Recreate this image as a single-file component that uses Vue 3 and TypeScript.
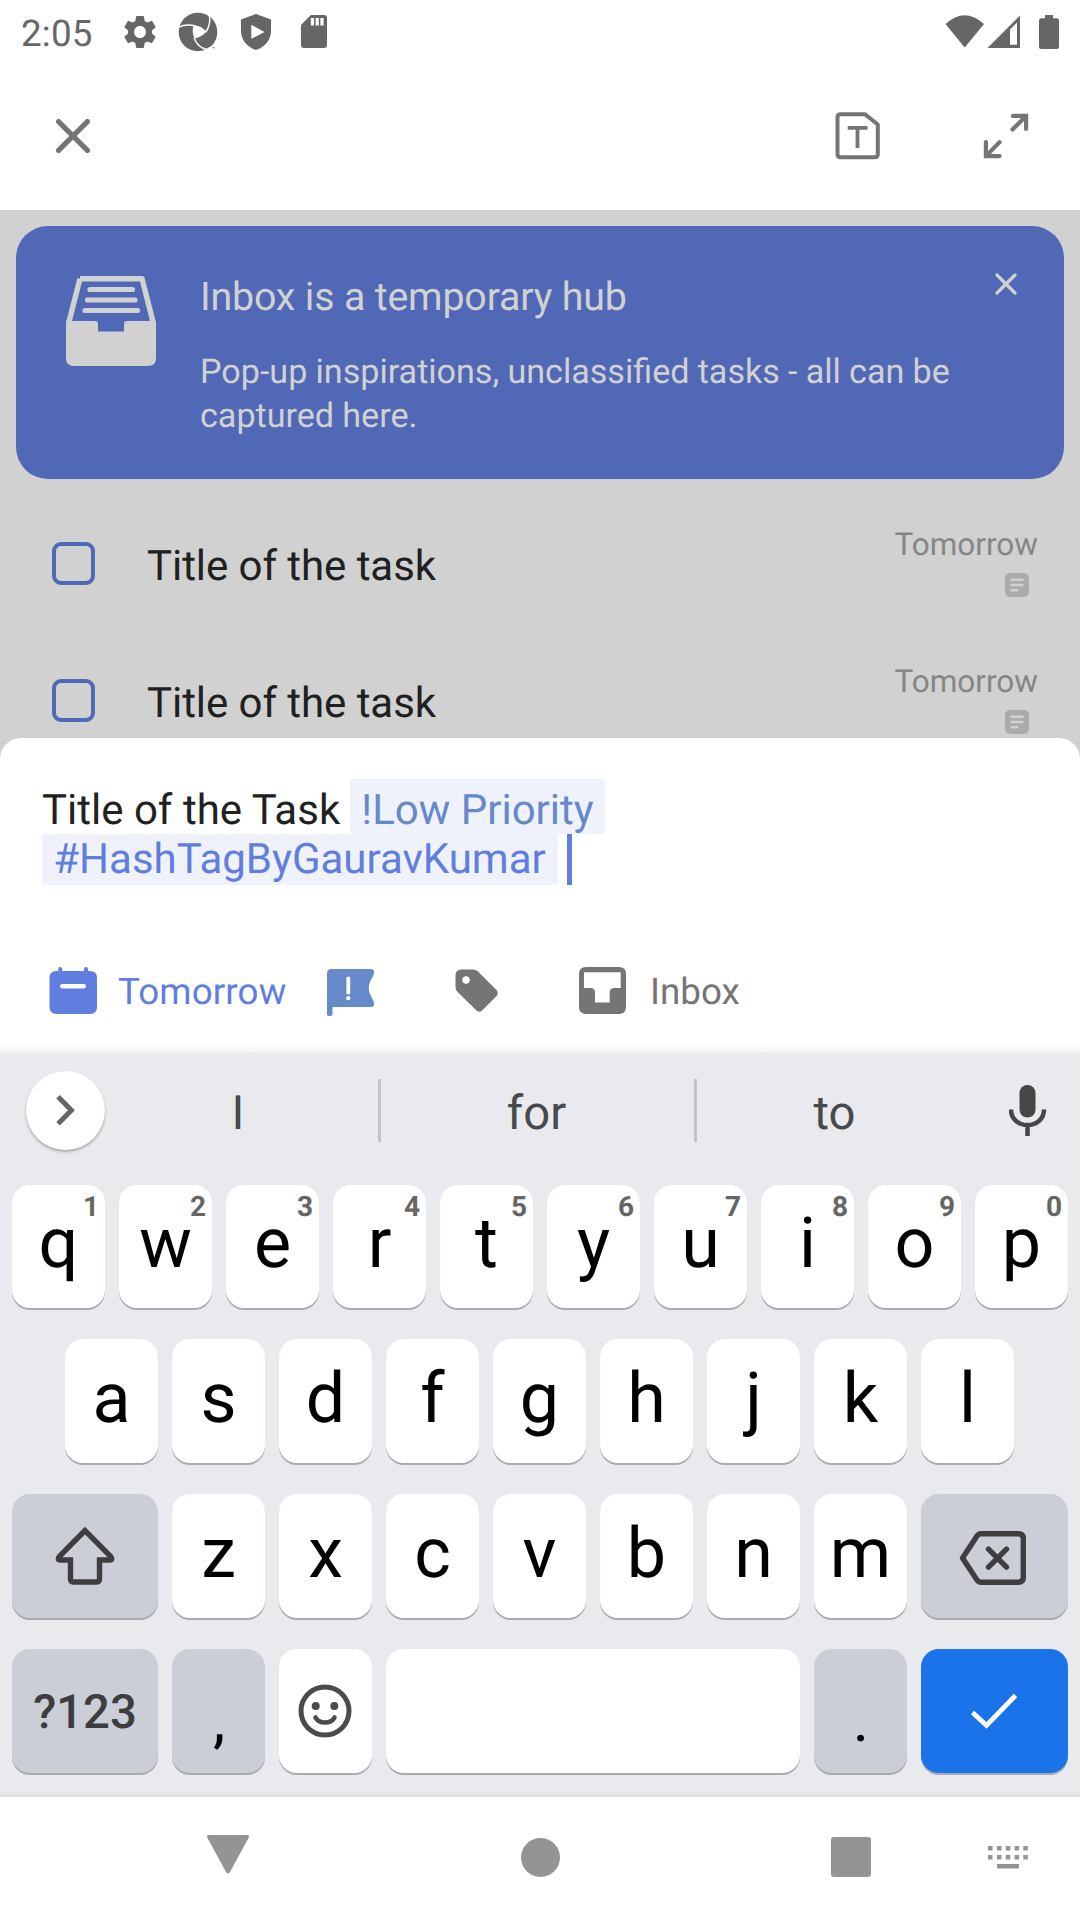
<script setup lang="ts">
interface Key {
  label: string
  hint?: string
}

const tasks = [
  { id: 1, title: 'Title of the task', due: 'Tomorrow' },
  { id: 2, title: 'Title of the task', due: 'Tomorrow' },
]

const topRow: Key[] = 'qwertyuiop'.split('').map((label, i) => ({
  label,
  hint: String((i + 1) % 10),
}))
const homeRow = 'asdfghjkl'.split('')
const bottomRow = 'zxcvbnm'.split('')
const suggestions = ['I', 'for', 'to']
</script>

<template>
  <div class="screen">
    <header class="top">
      <div class="status">
        <span class="clock">2:05</span>
        <svg class="gear" width="40" height="40" viewBox="0 0 24 24" fill="#666">
          <path d="M19.14 12.94c.04-.3.06-.61.06-.94 0-.32-.02-.64-.07-.94l2.03-1.58c.18-.14.23-.41.12-.61l-1.92-3.32c-.12-.22-.37-.29-.59-.22l-2.39.96c-.5-.38-1.03-.7-1.62-.94l-.36-2.54c-.04-.24-.24-.41-.48-.41h-3.84c-.24 0-.43.17-.47.41l-.36 2.54c-.59.24-1.13.57-1.62.94l-2.39-.96c-.22-.08-.47 0-.59.22L2.74 8.87c-.12.21-.08.47.12.61l2.03 1.58c-.05.3-.09.63-.09.94s.02.64.07.94l-2.03 1.58c-.18.14-.23.41-.12.61l1.92 3.32c.12.22.37.29.59.22l2.39-.96c.5.38 1.03.7 1.62.94l.36 2.54c.05.24.24.41.48.41h3.84c.24 0 .44-.17.47-.41l.36-2.54c.59-.24 1.13-.56 1.62-.94l2.39.96c.22.08.47 0 .59-.22l1.92-3.32c.12-.22.07-.47-.12-.61l-2.01-1.58zM12 15.6c-1.98 0-3.6-1.62-3.6-3.6s1.62-3.6 3.6-3.6 3.6 1.62 3.6 3.6-1.62 3.6-3.6 3.6z" />
        </svg>
        <svg class="aperture" width="40" height="40" viewBox="0 0 40 40">
          <circle cx="20" cy="20" r="19.3" fill="#666" />
          <path d="M15.5 13.6Q22 12.5 28.5 19.5Q24 25 16.5 26.6Q13.5 20 15.5 13.6Z" fill="#fff" />
          <g fill="none" stroke="#fff" stroke-width="1.5">
            <path d="M0 15.5Q8 11.5 18 14.2" />
            <path d="M31 2.5Q33.5 11 28 20" />
            <path d="M16 26Q20 35.500 28.500 37.500" />
          </g>
          <path d="M27.500 37L34 34V40H25Z" fill="#fff" />
          <path d="M34 35.800h3" stroke="#888" stroke-width="1" />
        </svg>
        <svg class="shield" width="30" height="36" viewBox="0 0 30 36" fill="#666">
          <path fill-rule="evenodd" d="M15 0L30 5.500V17C30 26 24 33 15 36C6 33 0 26 0 17V5.500ZM10.300 10.800V24.800L23.500 18Z" />
        </svg>
        <svg class="sd" width="26" height="33" viewBox="0 0 26 33" fill="#666">
          <path fill-rule="evenodd" d="M9.800 0H23Q26 0 26 3V30Q26 33 23 33H3Q0 33 0 30V10ZM9.800 3V10.500H13V3ZM14.600 3V10.500H17.800V3ZM19.400 3V10.500H22.600V3Z" />
        </svg>
        <svg class="signals" width="116" height="36" viewBox="944 13 116 36" fill="#666">
          <path d="M945.500 23Q964.500 5.500 984 23L964.700 46.500Z" />
          <path fill-rule="evenodd" d="M1020 14.500V47H987.500ZM1017 21.500L1010 28.500V43.800H1017Z" />
          <path d="M1045 14h8v3.300h3.500q2.500 0 2.500 2.500V45.500q0 2.500-2.500 2.500h-15q-2.500 0-2.500-2.500V19.800q0-2.500 2.500-2.500h3.500z" />
        </svg>
      </div>
      <div class="actions">
        <svg width="36" height="36" viewBox="0 0 36 36" stroke="#757575" stroke-width="5.200" stroke-linecap="round">
          <path d="M3.600 3.600L32.400 32.400M32.400 3.600L3.600 32.400" />
        </svg>
        <span class="spacer"></span>
        <svg class="template" width="46" height="48" viewBox="0 0 46 48" fill="none" stroke="#757575">
          <path d="M5.500 2.200H30L42.800 12.500V42.300Q42.800 45.300 39.800 45.300H5.500Q2.500 45.300 2.500 42.300V5.200Q2.500 2.200 5.500 2.200Z" stroke-width="4" stroke-linejoin="round" />
          <path d="M12.700 15.800H32.500M22.500 15.800V36" stroke-width="3.800" />
        </svg>
        <svg width="46" height="46" viewBox="0 0 46 46" fill="none" stroke="#757575" stroke-width="4.200" stroke-linecap="round">
          <path d="M30 2.900H43.100V16M43.100 2.900L29.500 16.500" />
          <path d="M2.900 29V43.100H16.500M2.900 43.100L16.500 29.300" />
        </svg>
      </div>
    </header>

    <main class="backdrop">
      <section class="banner">
        <svg class="tray" width="90" height="90" viewBox="0 0 90 90">
          <path d="M14 2.700H76L87.300 47M14 2.700L2.700 47" fill="none" stroke="#d1d1d1" stroke-width="5.400" stroke-linejoin="round" />
          <path d="M0 45H29Q32 45 32 48V55.500H58V48Q58 45 61 45H90V82Q90 90 82 90H8Q0 90 0 82Z" fill="#d1d1d1" />
          <path d="M24 13.500H66.500M21.500 24H69M19 34.500H71.500" stroke="#d1d1d1" stroke-width="5.200" stroke-linecap="round" />
        </svg>
        <div class="banner-copy">
          <h1>Inbox is a temporary hub</h1>
          <p>Pop-up inspirations, unclassified tasks - all can be captured here.</p>
        </div>
        <svg class="dismiss" width="22" height="22" viewBox="0 0 22 22" stroke="#d1d1d1" stroke-width="3.200" stroke-linecap="round">
          <path d="M2 2L20 20M20 2L2 20" />
        </svg>
      </section>

      <div v-for="task in tasks" :key="task.id" class="task">
        <span class="checkbox"></span>
        <span class="task-title">{{ task.title }}</span>
        <div class="meta">
          <span>{{ task.due }}</span>
          <svg width="24" height="24" viewBox="0 0 24 24">
            <rect width="24" height="24" rx="5" fill="#ababab" />
            <path d="M6.500 6.700H17.500M6.500 12H17.500M6.500 17.300H12" stroke="#d1d1d1" stroke-width="2.600" stroke-linecap="round" />
          </svg>
        </div>
      </div>
    </main>

    <div class="sheet-wrap">
      <section class="sheet">
        <div class="line first">
          <span class="typed">Title of the Task</span>
          <span class="chip priority">!Low Priority</span>
        </div>
        <div class="line">
          <span class="chip tag">#HashTagByGauravKumar</span>
          <span class="caret"></span>
        </div>
        <div class="tools">
          <svg width="48" height="48" viewBox="0 0 48 48" fill="#607edf">
            <path fill-rule="evenodd" d="M9.300 4V2q0-2 2-2t2 2v2H35V2q0-2 2-2t2 2v2h2q7 0 7 7V40q0 7-7 7H7.500q-7 0-7-7V11q0-7 7-7ZM13.500 17q-2.500 0-2.500 2.300t2.500 2.300h21q2.500 0 2.500-2.300T34.500 17Z" />
          </svg>
          <span class="tool-date">Tomorrow</span>
          <svg class="flag" width="50" height="50" viewBox="0 0 50 50">
            <path d="M5.500 3H44.500Q49 3 48 7.500C46 13 42.800 16 42.800 22S46 31 48 36.500Q49 41 44.500 41H6.500V48.500Q6 50 3.700 50T1 48.500V7.500Q1 3 5.500 3Z" fill="#6589ca" />
            <path d="M22.300 12.500V26.500" stroke="#fff" stroke-width="3.800" stroke-linecap="round" />
            <circle cx="22.300" cy="32.200" r="2.100" fill="#fff" />
          </svg>
          <svg class="label" width="44" height="44" viewBox="0 0 44 44" fill="#757575">
            <path fill-rule="evenodd" d="M6.500 .5H18Q21 .500 23 2.500L41.500 21Q44 24 41.500 27L27 41.500Q24.500 44 21.500 41.500L2.500 23Q.500 21 .500 18V6.500Q.500 .500 6.500 .500ZM11 7.300a3.700 3.700 0 1 0 0 7.400a3.700 3.700 0 1 0 0-7.400Z" />
          </svg>
          <svg class="box" width="48" height="48" viewBox="0 0 48 48" fill="#757575">
            <path fill-rule="evenodd" d="M7 0H40Q47 0 47 7V40Q47 47 40 47H7Q0 47 0 40V7Q0 0 7 0ZM5 5.300V21H11.500Q16 21 16 25.500V35.500H30.700V25.500Q30.700 21 35.200 21H41.700V5.300Z" />
          </svg>
          <span class="tool-list">Inbox</span>
        </div>
      </section>
    </div>

    <section class="keyboard">
      <div class="strip">
        <div class="more">
          <svg width="80" height="80" viewBox="0 0 80 80">
            <path d="M32.500 26L46 39.700L32.500 53.400" fill="none" stroke="#666" stroke-width="5" />
          </svg>
        </div>
        <template v-for="(word, i) in suggestions" :key="word">
          <span v-if="i > 0" class="rule"></span>
          <span class="word" :class="'w' + i">{{ word }}</span>
        </template>
        <svg class="mic" width="38" height="51" viewBox="0 0 38 51">
          <rect x="10.500" y="0" width="16" height="32.500" rx="8" fill="#444648" />
          <path d="M2 24.500C2 34 9.500 40 18.500 40S35 34 35 24.500M18.500 40V51" fill="none" stroke="#444648" stroke-width="4.500" />
        </svg>
      </div>

      <div class="row r1">
        <div v-for="key in topRow" :key="key.label" class="key">
          {{ key.label }}<span class="hint">{{ key.hint }}</span>
        </div>
      </div>
      <div class="row r2">
        <div v-for="letter in homeRow" :key="letter" class="key">{{ letter }}</div>
      </div>
      <div class="row">
        <div class="key wide grey">
          <svg class="shift" width="62" height="60" viewBox="0 0 62 60" fill="none" stroke="#3e3e40" stroke-width="5.400">
            <path d="M31 4.500L5.500 30.300Q2.500 34 6.500 34H16.500V53Q16.500 56 19.500 56H42.500Q45.500 56 45.500 53V34H55.500Q59.500 34 56.500 30.300Z" />
          </svg>
        </div>
        <div v-for="letter in bottomRow" :key="letter" class="key">{{ letter }}</div>
        <div class="key wide-end grey">
          <svg class="erase" width="68" height="56" viewBox="0 0 68 56" fill="none" stroke="#3e3e40" stroke-width="5.400" stroke-linejoin="round">
            <path d="M22 3.700H59Q64.300 3.700 64.300 8V47.500Q64.300 52.200 59 52.200H22Q19.500 52.200 18 50L3.500 28L18 6Q19.500 3.700 22 3.700Z" />
            <path d="M29.500 19.200L47.500 37.200M47.500 19.200L29.500 37.200" stroke-linecap="round" />
          </svg>
        </div>
      </div>
      <div class="row">
        <div class="key wide grey sym">?123</div>
        <div class="key grey punct">,</div>
        <div class="key">
          <svg class="smile" width="54" height="54" viewBox="0 0 54 54">
            <circle cx="27" cy="27" r="24" fill="none" stroke="#4b4b4d" stroke-width="5" />
            <circle cx="17.700" cy="22" r="4" fill="#4b4b4d" />
            <circle cx="36.300" cy="22" r="4" fill="#4b4b4d" />
            <path d="M17.500 33.500Q20 38.500 27 38.500T36.500 33.500" fill="none" stroke="#4b4b4d" stroke-width="4.600" stroke-linecap="round" />
          </svg>
        </div>
        <div class="key space"></div>
        <div class="key grey punct">.</div>
        <div class="key wide-end enter">
          <svg width="48" height="38" viewBox="0 0 48 38" fill="none" stroke="#fff" stroke-width="4.800">
            <path d="M2.500 20.500L16.500 33.500L45.500 3.500" />
          </svg>
        </div>
      </div>
    </section>

    <nav class="nav">
      <svg class="back" width="42" height="39" viewBox="0 0 42 39" fill="#949494">
        <path d="M2 0H40Q43 0 41.500 3L23 37Q21 40 19 37L.500 3Q-1 0 2 0Z" />
      </svg>
      <span class="home"></span>
      <span class="recents"></span>
      <svg class="ime" width="42" height="24" viewBox="0 0 42 24" fill="#949494">
        <path d="M1 0h4.500v4.500H1zM10 0h4.500v4.500H10zM18.800 0h4.500v4.500h-4.500zM27.600 0h4.500v4.500h-4.500zM36.300 0h4.500v4.500h-4.500zM1 9h4.500v4.500H1zM10 9h4.500v4.500H10zM18.800 9h4.500v4.500h-4.500zM27.600 9h4.500v4.500h-4.500zM36.300 9h4.500v4.500h-4.500zM10 18h22v4.500H10z" />
      </svg>
    </nav>
  </div>
</template>

<style>
body {
  margin: 0;
  background: #fff;
}
</style>

<style scoped>
.screen {
  width: 1080px;
  height: 1920px;
  display: flex;
  flex-direction: column;
  overflow: hidden;
  background: #fff;
  font-family: Roboto, 'Liberation Sans', sans-serif;
  text-rendering: geometricPrecision;
}
.screen * {
  box-sizing: border-box;
}
svg {
  display: block;
  flex: none;
}

/* Status bar and actions */
.top {
  height: 210px;
  flex: none;
}
.status {
  height: 63px;
  display: flex;
  align-items: center;
  padding: 0 20px 0 21px;
}
.clock {
  width: 99px;
  font-size: 36.75px;
  line-height: 43px;
  letter-spacing: 0.2px;
  padding-top: 3px;
  color: #666;
}
.aperture {
  margin-left: 18px;
}
.shield {
  margin-left: 23px;
}
.sd {
  margin-left: 30px;
}
.signals {
  margin-left: auto;
}
.actions {
  height: 147px;
  padding: 0 51px 2px 55px;
  display: flex;
  align-items: center;
}
.spacer {
  flex: 1;
}
.template {
  margin-right: 102px;
}

/* Dimmed list */
.backdrop {
  height: 528px;
  flex: none;
  background: #d1d1d1;
  overflow: hidden;
  padding-top: 16px;
}
.banner {
  height: 253px;
  margin: 0 16px 16px;
  border-radius: 32px;
  background: #5068b5;
  color: #d1d1d1;
  display: flex;
  align-items: flex-start;
}
.tray {
  margin: 50px 0 0 50px;
}
.banner-copy {
  margin: 47px 0 0 44px;
  width: 770px;
}
h1 {
  margin: 0 0 30px;
  font-size: 39.375px;
  line-height: 47px;
  font-weight: 400;
  letter-spacing: -0.18px;
}
p {
  margin: 0;
  font-size: 34.125px;
  line-height: 44px;
  /* word-spacing keeps the fi ligature, which letter-spacing would break */
  word-spacing: -0.25px;
}
.dismiss {
  margin: 47px 0 0 25px;
}
.task {
  height: 137px;
  padding: 0 42px 0 52px;
  display: flex;
  align-items: flex-start;
}
.checkbox {
  width: 43px;
  height: 43px;
  margin-top: 47px;
  border: 4.500px solid #5068b8;
  border-radius: 9px;
}
.task-title {
  margin: 47px 0 0 52px;
  font-size: 42px;
  line-height: 49px;
  letter-spacing: -0.06px;
  color: #202020;
}
.meta {
  margin: 31px 0 0 auto;
  display: flex;
  flex-direction: column;
  align-items: flex-end;
  font-size: 31.5px;
  line-height: 37px;
  color: #868686;
}
.meta svg {
  margin: 10px 9px 0 0;
}

/* Quick add sheet */
.sheet-wrap {
  height: 315px;
  flex: none;
  background: #d1d1d1;
}
.sheet {
  height: 315px;
  padding: 41px 42px 0;
  border-radius: 21px 21px 0 0;
  background: linear-gradient(#fff 307px, #f1f1f1 315px);
}
.line {
  display: flex;
  height: 51px;
  font-size: 42px;
  line-height: 49px;
  white-space: nowrap;
}
.line.first {
  height: 55px;
}
.first .typed,
.first .chip {
  padding-top: 7px;
}
.typed {
  width: 308px;
  color: #212121;
}
.chip {
  text-align: center;
  background: #eff2fb;
  border-radius: 3px;
}
.priority {
  width: 255px;
  color: #6589ca;
}
.tag {
  width: 516px;
  padding: 1px 1px 0 0;
  color: #607edf;
}
.caret {
  width: 5px;
  height: 51px;
  margin-left: 9px;
  background: #607edf;
}
.tools {
  height: 60px;
  margin: 76px 0 0 7px;
  display: flex;
  align-items: center;
  font-size: 36.75px;
  line-height: 43px;
}
.tool-date {
  width: 168px;
  margin-left: 21px;
  letter-spacing: 0.12px;
  color: #607edf;
}
.flag {
  margin-left: 40px;
}
.label {
  margin-left: 79px;
}
.box {
  margin-left: 80px;
}
.tool-list {
  margin-left: 23px;
  color: #757575;
}

/* Keyboard */
.keyboard {
  height: 741px;
  flex: none;
  background: #e8eaed;
  display: flex;
  flex-direction: column;
}
.strip {
  height: 115px;
  margin-bottom: 17px;
  flex: none;
  display: flex;
  align-items: center;
}
.more {
  width: 71px;
  margin-left: 26px;
}
.more svg {
  width: 79px;
  height: 79px;
  border-radius: 50%;
  background: #fff;
  box-shadow: 0 2px 3px rgba(0, 0, 0, 0.28);
}
.word {
  padding-top: 5px;
  font-size: 47.25px;
  line-height: 56px;
  color: #47494b;
  text-align: center;
}
.w0 {
  width: 281px;
  padding-left: 1px;
}
.w1 {
  width: 313px;
  padding-right: 2px;
}
.w2 {
  width: 275px;
}
.rule {
  width: 3px;
  height: 63px;
  background: #c3c4c8;
}
.mic {
  margin-left: 37px;
}
.row {
  height: 124px;
  margin-bottom: 31px;
  padding: 0 12px;
  display: flex;
  gap: 14px;
  flex: none;
}
.r1 {
  height: 123px;
}
.r2 {
  padding: 0 66px 0 65px;
}
.key {
  position: relative;
  flex: 1 1 0;
  display: flex;
  align-items: center;
  justify-content: center;
  padding-bottom: 5px;
  border-radius: 18px;
  background: #fff;
  box-shadow: 0 2px 0 #a9abae;
  font-size: 70px;
  line-height: 82px;
  color: #000;
}
.wide {
  flex: 0 0 146px;
}
.wide-end {
  flex: 0 0 147px;
}
.grey {
  background: #cbced6;
}
.hint {
  position: absolute;
  top: 5px;
  right: 6px;
  font-size: 28px;
  line-height: 33px;
  font-weight: 700;
  color: #666;
}
.shift {
  margin-top: 5px;
}
.erase {
  margin: 9px 0 0 -3px;
}
.sym {
  padding: 2px 0 0;
  font-size: 47.25px;
  font-weight: 500;
  color: #3c3d40;
}
.punct {
  padding: 20px 0 0 1px;
  font-size: 62px;
}
.smile {
  margin-top: 5px;
}
.space {
  flex: 0 0 414px;
}
.enter {
  padding: 0;
  background: #1a73e8;
}

/* System navigation */
.nav {
  height: 126px;
  flex: none;
  border-top: 3px solid #dfe1e1;
  display: flex;
  align-items: flex-start;
}
.back {
  margin: 38px 0 0 207px;
}
.home {
  width: 39px;
  height: 39px;
  margin: 40.500px 0 0 271.500px;
  border-radius: 50%;
  background: #949494;
}
.recents {
  width: 40px;
  height: 40px;
  margin: 40px 0 0 271.500px;
  border-radius: 3px;
  background: #949494;
}
.ime {
  margin: 49px 0 0 116px;
}
</style>
